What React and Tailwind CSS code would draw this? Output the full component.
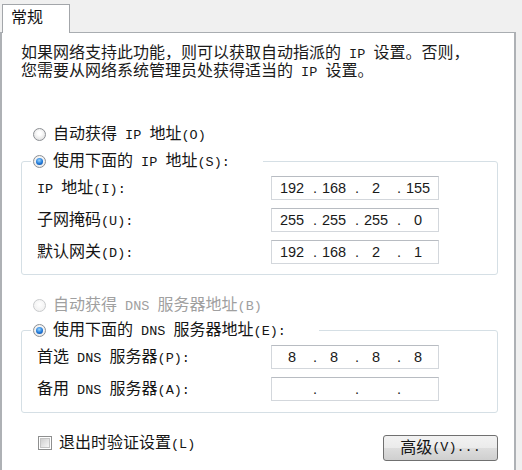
import React from "react";

// 把 ASCII 片段换成等宽字体，模拟宋体的半角字符
function Mix({ text }) {
  const parts = text.split(/([\x00-\xff]+)/);
  return parts.map((p, i) =>
    /[\x00-\xff]/.test(p) ? (
      <span key={i} className="inline-block h-[10px] font-['Liberation_Mono'] text-[13.5px] leading-[10px] whitespace-pre">
        {p}
      </span>
    ) : (
      <React.Fragment key={i}>{p}</React.Fragment>
    ),
  );
}

function Radio({ checked, disabled }) {
  if (checked) {
    return (
      <span className="flex h-[13px] w-[13px] shrink-0 items-center justify-center rounded-full border border-[#8c8f94] bg-[radial-gradient(circle_at_50%_40%,#ffffff,#e4e4e4)]">
        <span className="h-[7px] w-[7px] rounded-full bg-[radial-gradient(circle_at_45%_35%,#9ad6ff,#1f78d8_55%,#0b3f8f)]" />
      </span>
    );
  }
  return (
    <span
      className={
        disabled
          ? "h-[13px] w-[13px] shrink-0 rounded-full border border-[#c9cbcd] bg-[radial-gradient(circle_at_50%_40%,#ffffff,#ececec)]"
          : "h-[13px] w-[13px] shrink-0 rounded-full border border-[#8c8f94] bg-[radial-gradient(circle_at_50%_40%,#ffffff_20%,#d6d6d6)]"
      }
    />
  );
}

function IpField({ octets }) {
  return (
    <div className="flex h-[24px] w-[168px] items-center border border-[#d3d7dc] border-t-[#b8bcc2] bg-white pl-[3px] font-['Liberation_Sans'] text-[14.5px] leading-none text-[#1a1a1a]">
      {octets.map((o, i) => (
        <React.Fragment key={i}>
          <span className="w-[34px] text-center">{o}</span>
          {i < 3 && <span className="flex w-[8px] justify-end">.</span>}
        </React.Fragment>
      ))}
    </div>
  );
}

function Row({ label, octets }) {
  return (
    <div className="flex h-[24px] items-center pl-[15px]">
      <span className="w-[234px] leading-[20px]">
        <Mix text={label} />
      </span>
      <IpField octets={octets} />
    </div>
  );
}

function Group({ legend, rows, pb }) {
  return (
    <fieldset className={`rounded-[3px] border border-[#d5dfe5] ${pb}`}>
      <legend className="ml-[9px] flex h-[20px] items-center gap-[7px] pl-[2px] pr-[33px]">
        <Radio checked />
        <span className="leading-[20px]">
          <Mix text={legend} />
        </span>
      </legend>
      <div className="mt-[5px] flex flex-col gap-2">
        {rows.map((r) => (
          <Row key={r.label} label={r.label} octets={r.octets} />
        ))}
      </div>
    </fieldset>
  );
}

export default function App() {
  return (
    <div className="flex h-[470px] w-[522px] flex-col overflow-hidden bg-[#f0f0f0] font-['Liberation_Sans','Noto_Sans_CJK_SC',sans-serif] text-[16px] leading-[20px] text-[#151515]">
      {/* Tab */}
      <div className="flex h-[32px] items-start">
        <div className="relative z-10 ml-[2px] mt-[4px] flex h-[29px] w-[68px] items-start border-x border-t border-[#a3a6aa] bg-white pl-[8px] pt-[3px]">
          常规
        </div>
      </div>

      {/* Panel */}
      <div className="flex w-[516px] flex-1 flex-col border-l-2 border-r-2 border-t border-[#aeb1b5] border-t-[#a9adb1] bg-white pl-[19px] pr-[16px]">
        <p className="mt-[11px] text-[#1a1a1a]">
          <span className="block h-[18px] leading-[18px]">
            <Mix text="如果网络支持此功能，则可以获取自动指派的 IP 设置。否则，" />
          </span>
          <span className="block h-[18px] leading-[18px]">
            <Mix text="您需要从网络系统管理员处获得适当的 IP 设置。" />
          </span>
        </p>

        <div className="mt-[44px] flex h-[20px] items-center gap-[7px] pl-[12px]">
          <Radio />
          <span>
            <Mix text="自动获得 IP 地址(O)" />
          </span>
        </div>

        <div className="mt-[7px]">
          <Group
            legend="使用下面的 IP 地址(S):"
            pb="pb-[10px]"
            rows={[
              { label: "IP 地址(I):", octets: ["192", "168", "2", "155"] },
              { label: "子网掩码(U):", octets: ["255", "255", "255", "0"] },
              { label: "默认网关(D):", octets: ["192", "168", "2", "1"] },
            ]}
          />
        </div>

        <div className="mt-[20px] flex h-[20px] items-center gap-[7px] pl-[12px] text-[#a0a0a0]">
          <Radio disabled />
          <span>
            <Mix text="自动获得 DNS 服务器地址(B)" />
          </span>
        </div>

        <div className="mt-[5px]">
          <Group
            legend="使用下面的 DNS 服务器地址(E):"
            pb="pb-[11px]"
            rows={[
              { label: "首选 DNS 服务器(P):", octets: ["8", "8", "8", "8"] },
              { label: "备用 DNS 服务器(A):", octets: ["", "", "", ""] },
            ]}
          />
        </div>

        <div className="mt-[20px] flex items-start">
          <div className="flex h-[20px] items-center gap-[7px] pl-[17px]">
            <span className="flex h-[14px] w-[14px] items-center justify-center border border-[#8e8f8f] bg-white">
              <span className="h-[10px] w-[10px] border border-[#c4c4c4] bg-[linear-gradient(135deg,#cfcfcf,#f6f6f6)]" />
            </span>
            <span>
              <Mix text="退出时验证设置(L)" />
            </span>
          </div>
          <button className="ml-auto mt-[2px] flex h-[26px] w-[115px] items-center justify-center rounded-[3px] border border-[#707070] bg-[linear-gradient(#f2f2f2,#ebebeb_50%,#dddddd_51%,#cfcfcf)] leading-[20px] text-[#151515]">
            <Mix text="高级(V)..." />
          </button>
        </div>
      </div>
    </div>
  );
}
